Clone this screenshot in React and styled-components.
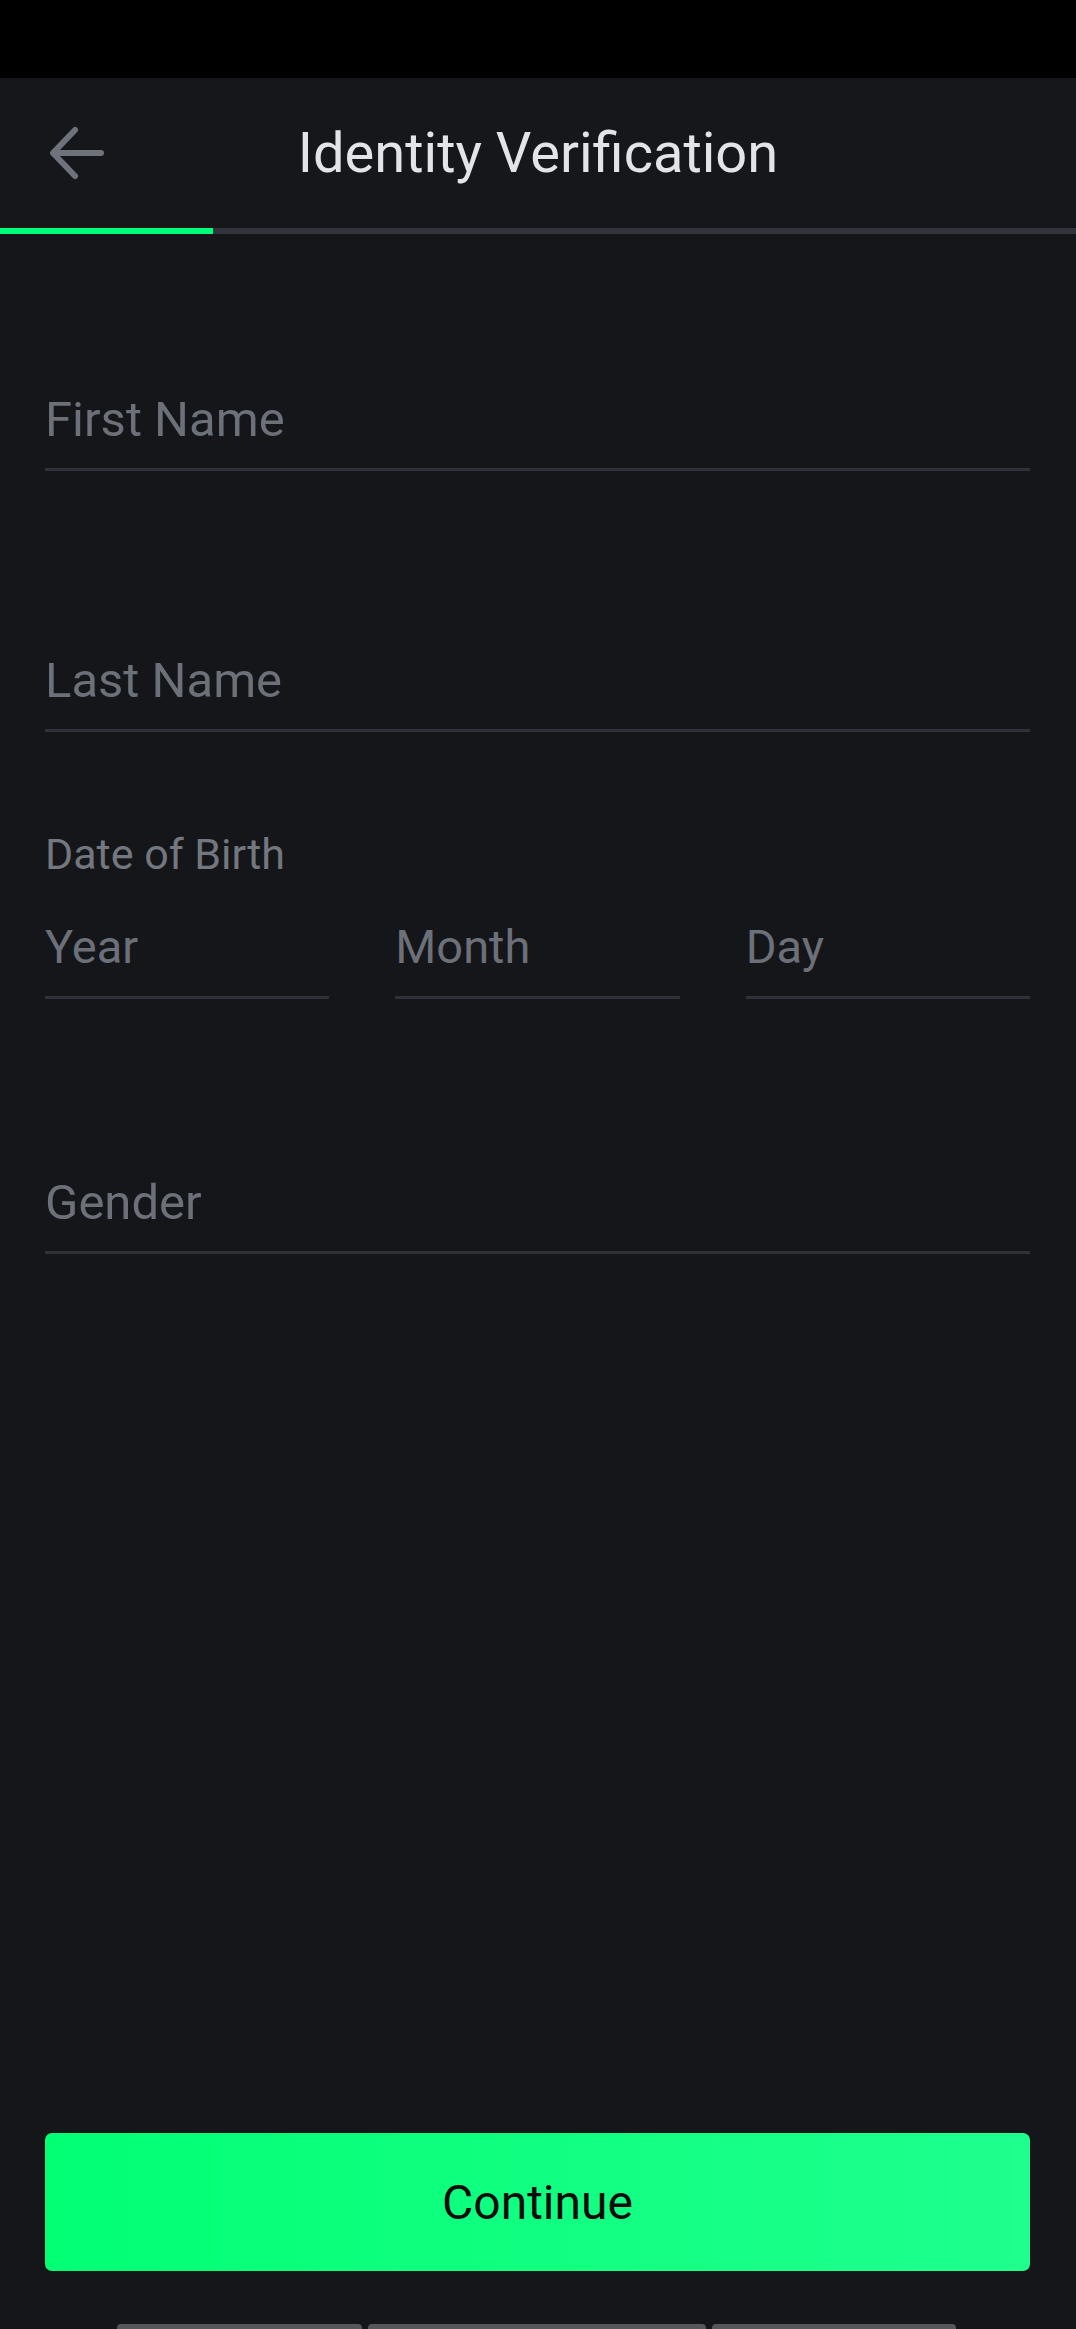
import React from "react";
import styled, { createGlobalStyle } from "styled-components";

const GlobalStyle = createGlobalStyle`
  * {
    box-sizing: border-box;
  }

  body {
    margin: 0;
    background: #141619;
    font-family: Roboto, "Noto Sans", sans-serif;
  }
`;

const Page = styled.div`
  width: 1076px;
  height: 2329px;
  overflow: hidden;
  display: flex;
  flex-direction: column;
  background: #141619;
`;

const StatusBar = styled.div`
  height: 78px;
  background: #000;
`;

const Header = styled.header`
  height: 150px;
  display: flex;
  align-items: center;
  justify-content: center;
  position: relative;
  background: #15171b;
`;

const BackButton = styled.button`
  position: absolute;
  left: 44px;
  top: 50%;
  transform: translateY(-50%);
  width: 66px;
  height: 66px;
  padding: 0;
  border: none;
  background: none;
  display: flex;
  align-items: center;
  justify-content: center;
  cursor: pointer;
`;

const Title = styled.h1`
  margin: 0;
  font-size: 56px;
  line-height: 64px;
  font-weight: 400;
  color: #e2e4e7;
`;

const Progress = styled.div`
  height: 6px;
  background: #31343c;
`;

const ProgressFill = styled.div`
  height: 100%;
  background: #00ff78;
`;

const Form = styled.form`
  display: flex;
  flex-direction: column;
  padding: 0 46px 0 45px;
`;

const Field = styled.div`
  margin-top: ${(p) => p.$gap}px;
  padding-bottom: ${(p) => p.$pad || 18}px;
  border-bottom: 3px solid #2e3138;
  font-size: ${(p) => p.$size || 49}px;
  line-height: ${(p) => p.$line || 60}px;
  color: #6c7079;
`;

const Label = styled.div`
  margin-top: ${(p) => p.$gap}px;
  font-size: 43px;
  line-height: 50px;
  color: #73777f;
`;

const DateRow = styled.div`
  display: grid;
  grid-template-columns: repeat(3, 1fr);
  column-gap: 66px;
  margin-top: 39px;

  ${Field} {
    margin-top: 0;
  }
`;

const Footer = styled.div`
  margin-top: auto;
  padding: 0 46px 0 45px;
`;

const ContinueButton = styled.button`
  width: 100%;
  height: 138px;
  border: none;
  border-radius: 7px;
  background: linear-gradient(90deg, #02ff74 0%, #12ff82 55%, #1eff8e 100%);
  color: #0b0c0e;
  font-family: Roboto, "Noto Sans", sans-serif;
  font-size: 48px;
  font-weight: 400;
  cursor: pointer;
`;

const NavStub = styled.div`
  display: flex;
  gap: 6px;
  margin: 53px 0 0 117px;
  height: 5px;
`;

const NavKey = styled.div`
  width: ${(p) => p.$w}px;
  height: 100%;
  background: #56575b;
  border-radius: 4px 4px 0 0;
`;

function BackArrow() {
  return (
    <svg width="66" height="66" viewBox="0 0 66 66" fill="none">
      <path
        d="M57 33H10M31 10L9 33L31 56"
        stroke="#6e727b"
        strokeWidth="6"
        strokeLinecap="round"
        strokeLinejoin="round"
      />
    </svg>
  );
}

export default function App() {
  return (
    <>
      <GlobalStyle />
      <Page>
        <StatusBar />
        <Header>
          <BackButton aria-label="Back">
            <BackArrow />
          </BackButton>
          <Title>Identity Verification</Title>
        </Header>
        <Progress>
          <ProgressFill style={{ width: `${(213 / 1076) * 100}%` }} />
        </Progress>

        <Form>
          <Field $gap={156}>First Name</Field>
          <Field $gap={180}>Last Name</Field>

          <Label $gap={97}>Date of Birth</Label>
          <DateRow>
            <Field $size={47} $line={58} $pad={20}>Year</Field>
            <Field $size={47} $line={58} $pad={20}>Month</Field>
            <Field $size={47} $line={58} $pad={20}>Day</Field>
          </DateRow>

          <Field $gap={174}>Gender</Field>
        </Form>

        <Footer>
          <ContinueButton type="button">Continue</ContinueButton>
        </Footer>
        <NavStub>
          <NavKey $w={245} />
          <NavKey $w={338} />
          <NavKey $w={244} />
        </NavStub>
      </Page>
    </>
  );
}
